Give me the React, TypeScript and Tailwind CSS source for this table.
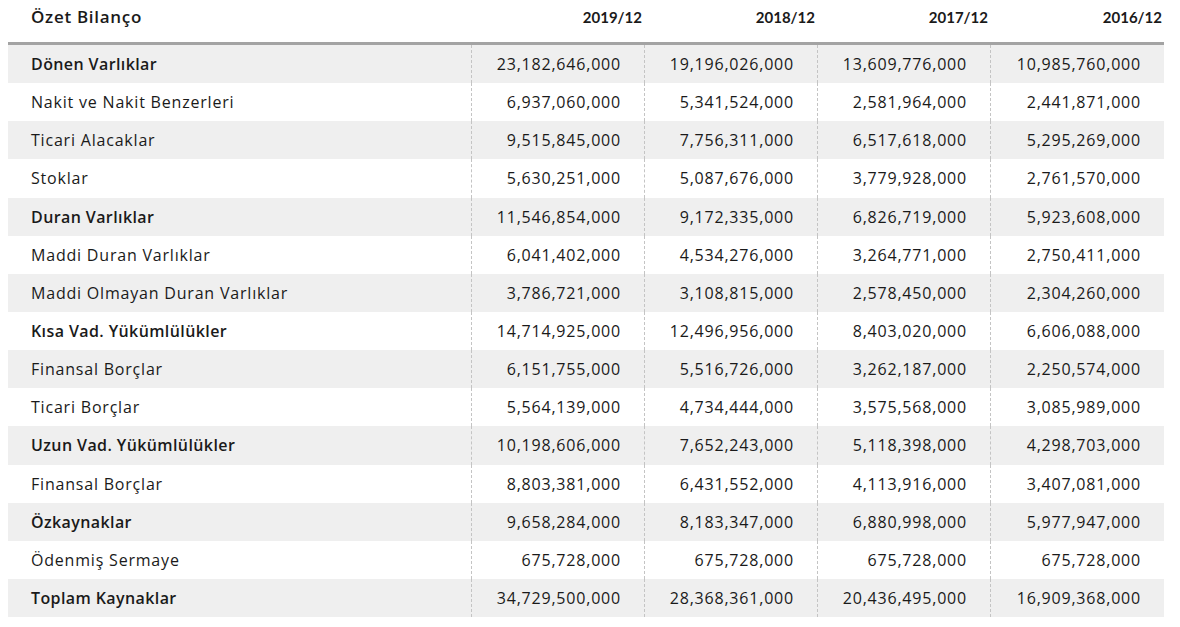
import React from "react";

const rows: [string, boolean, string[]][] = [
  ["Dönen Varlıklar", true, ["23,182,646,000", "19,196,026,000", "13,609,776,000", "10,985,760,000"]],
  ["Nakit ve Nakit Benzerleri", false, ["6,937,060,000", "5,341,524,000", "2,581,964,000", "2,441,871,000"]],
  ["Ticari Alacaklar", false, ["9,515,845,000", "7,756,311,000", "6,517,618,000", "5,295,269,000"]],
  ["Stoklar", false, ["5,630,251,000", "5,087,676,000", "3,779,928,000", "2,761,570,000"]],
  ["Duran Varlıklar", true, ["11,546,854,000", "9,172,335,000", "6,826,719,000", "5,923,608,000"]],
  ["Maddi Duran Varlıklar", false, ["6,041,402,000", "4,534,276,000", "3,264,771,000", "2,750,411,000"]],
  ["Maddi Olmayan Duran Varlıklar", false, ["3,786,721,000", "3,108,815,000", "2,578,450,000", "2,304,260,000"]],
  ["Kısa Vad. Yükümlülükler", true, ["14,714,925,000", "12,496,956,000", "8,403,020,000", "6,606,088,000"]],
  ["Finansal Borçlar", false, ["6,151,755,000", "5,516,726,000", "3,262,187,000", "2,250,574,000"]],
  ["Ticari Borçlar", false, ["5,564,139,000", "4,734,444,000", "3,575,568,000", "3,085,989,000"]],
  ["Uzun Vad. Yükümlülükler", true, ["10,198,606,000", "7,652,243,000", "5,118,398,000", "4,298,703,000"]],
  ["Finansal Borçlar", false, ["8,803,381,000", "6,431,552,000", "4,113,916,000", "3,407,081,000"]],
  ["Özkaynaklar", true, ["9,658,284,000", "8,183,347,000", "6,880,998,000", "5,977,947,000"]],
  ["Ödenmiş Sermaye", false, ["675,728,000", "675,728,000", "675,728,000", "675,728,000"]],
  ["Toplam Kaynaklar", true, ["34,729,500,000", "28,368,361,000", "20,436,495,000", "16,909,368,000"]],
];

const years = ["2019/12", "2018/12", "2017/12", "2016/12"];

export default function App() {
  return (
    <div className="w-[1180px] h-[627px] bg-white text-[#1a1a1a] font-['Open_Sans',sans-serif] pl-[8px] pr-[16px]">
      <div className="grid grid-cols-[463px_173px_173px_173px_174px] h-[42px] items-center pb-[8px]">
        <div className="pl-[23px] text-[17px] font-semibold tracking-[0.7px]">Özet Bilanço</div>
        {years.map((y) => (
          <div key={y} className="text-right pr-[2px] text-[15px] font-bold font-['Lato',sans-serif]">
            {y}
          </div>
        ))}
      </div>
      <div className="h-[3px] bg-[#a3a3a3]" />
      {rows.map(([label, bold, vals], i) => (
        <div
          key={i}
          className={`grid grid-cols-[463px_173px_173px_173px_174px] h-[38.15px] items-center text-[16px] tracking-[0.8px] ${
            i % 2 === 0 ? "bg-[#efefef]" : "bg-white"
          }`}
        >
          <div className={`pl-[23px] ${bold ? "font-semibold tracking-[0.4px]" : ""}`}>{label}</div>
          {vals.map((v, j) => (
            <div
              key={j}
              className="h-full flex items-center justify-end pr-[23px] border-l border-dashed border-[#c4c4c4]"
            >
              {v}
            </div>
          ))}
        </div>
      ))}
    </div>
  );
}
